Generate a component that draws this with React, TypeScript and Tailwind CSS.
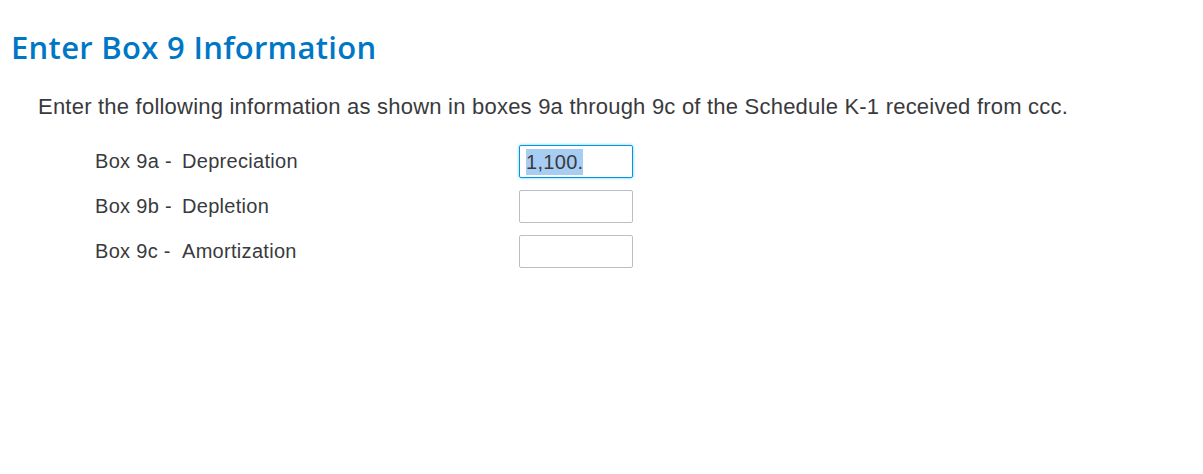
import React from "react";

const rows = [
  { box: "Box 9a -", label: "Depreciation", value: "1,100.", focused: true },
  { box: "Box 9b -", label: "Depletion", value: "", focused: false },
  { box: "Box 9c -", label: "Amortization", value: "", focused: false },
];

export default function App() {
  return (
    <div className="w-[1203px] h-[474px] bg-white">
      <h1
        className="pl-[11px] pt-[27px] text-[31px] leading-[40px] tracking-[0.3px] text-[#0077c5] font-semibold"
        style={{ fontFamily: "'Open Sans', Lato, sans-serif" }}
      >
        Enter Box 9 Information
      </h1>
      <p
        className="pl-[38px] mt-[26px] text-[22px] leading-[28px] tracking-[0.22px] text-[#393a3d]"
        style={{ fontFamily: "'Liberation Sans', Arial, sans-serif" }}
      >
        Enter the following information as shown in boxes 9a through 9c of the Schedule K-1 received from ccc.
      </p>
      <div
        className="pl-[95px] mt-[24px] flex flex-col gap-[12px] text-[20px] tracking-[0.3px] text-[#393a3d]"
        style={{ fontFamily: "'Liberation Sans', Arial, sans-serif" }}
      >
        {rows.map((r) => (
          <div key={r.box} className="flex items-center h-[33px] leading-[33px]">
            <div className="w-[424px] flex">
              <span className="w-[87px]">{r.box}</span>
              <span>{r.label}</span>
            </div>
            {r.focused ? (
              <div className="w-[114px] h-[33px] rounded-[2px] border border-[#0098e0] shadow-[0_0_3px_rgba(0,152,224,0.6)] flex items-center pl-[6px]">
                <span className="bg-[#a8cdf2] text-[#393a3d] leading-[26px] text-[20px] tracking-[0.3px]">{r.value}</span>
              </div>
            ) : (
              <div className="w-[114px] h-[33px] rounded-[2px] border border-[#babec5]" />
            )}
          </div>
        ))}
      </div>
    </div>
  );
}
